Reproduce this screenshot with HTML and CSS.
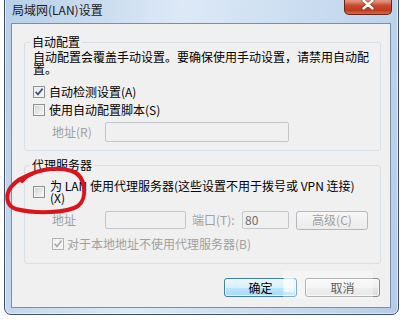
FILE: index.html
```html
<!DOCTYPE html>
<html lang="zh-CN">
<head>
<meta charset="utf-8">
<title>局域网(LAN)设置</title>
<link rel="stylesheet" href="styles.css">
</head>
<body>
<div class="window">
  <div class="titlebar">
    <span class="title">局域网(LAN)设置</span>
    <span class="close">
      <svg width="14" height="11" viewBox="0 0 14 11">
        <path d="M2.5 1.5 L11.5 9.5 M11.5 1.5 L2.5 9.5" stroke="#6a2a1c" stroke-width="4" stroke-linecap="round" fill="none" opacity="0.55"/>
        <path d="M2.5 1.5 L11.5 9.5 M11.5 1.5 L2.5 9.5" stroke="#ffffff" stroke-width="2.4" stroke-linecap="round" fill="none"/>
      </svg>
    </span>
  </div>
  <div class="client">
    <fieldset class="group g1">
      <legend>自动配置</legend>
      <p class="desc">自动配置会覆盖手动设置。要确保使用手动设置，请禁用自动配<br>置。</p>
      <div class="row r-c1">
        <span class="cb checked"><svg width="10" height="10" viewBox="0 0 10 10"><path d="M1.6 4.8 L4 7.4 L8.6 1.6" stroke="#3f5489" stroke-width="1.7" fill="none"/></svg></span>
        <span class="cb-text">自动检测设置(A)</span>
      </div>
      <div class="row r-c2">
        <span class="cb"></span>
        <span class="cb-text">使用自动配置脚本(S)</span>
      </div>
      <div class="row r-addr">
        <span class="lbl dis">地址(R)</span>
        <span class="field f1"></span>
      </div>
    </fieldset>
    <fieldset class="group g2">
      <legend>代理服务器</legend>
      <div class="row r-proxy">
        <span class="cb"></span>
        <span class="proxy-text">为 LAN 使用代理服务器(这些设置不用于拨号或 VPN 连接)<br>(X)</span>
      </div>
      <div class="row r-addr2">
        <span class="lbl dis">地址</span>
        <span class="field f2"></span>
        <span class="lbl2 dis">端口(T):</span>
        <span class="field f3">80</span>
        <span class="btn-dis">高级(C)</span>
      </div>
      <div class="row r-local">
        <span class="cb dis checked"><svg width="10" height="10" viewBox="0 0 10 10"><path d="M1.6 4.8 L4 7.4 L8.6 1.6" stroke="#a9a9a9" stroke-width="1.6" fill="none"/></svg></span>
        <span class="local-text dis">对于本地地址不使用代理服务器(B)</span>
      </div>
    </fieldset>
    <div class="buttons">
      <button class="btn btn-default">确定</button>
      <button class="btn btn-cancel">取消</button>
    </div>
  </div>
</div>
<div class="watermark"><span class="wm-block"></span></div>
<svg class="annotation" width="404" height="320" viewBox="0 0 404 320">
  <path d="M22 181 C30 170 56 166 72 171 C86 176 88 198 78 206 C68 213 35 214 16 209 C6 206 5 195 11 187 C15 182 22 177 32 174" stroke="#d9141b" stroke-width="4" stroke-linecap="round" fill="none"/>
</svg>
</body>
</html>
```
FILE: styles.css
```css
html, body {
  margin: 0;
  padding: 0;
}
body {
  width: 404px;
  height: 320px;
  overflow: hidden;
  position: relative;
  background: #ffffff;
  font-family: "Noto Sans CJK SC", "Noto Sans", sans-serif;
  font-size: 12px;
  color: #000;
}
.window {
  margin: -6px 0 0 4px;
  width: 395px;
  height: 321px;
  box-sizing: border-box;
  border: 1px solid #3e4f63;
  border-radius: 7px;
  background: linear-gradient(100deg, #b7cfe9 0%, #c9dbef 20%, #dde9f6 40%, #cfe0f2 60%, #c2d7ee 80%, #b4cce8 100%);
  box-shadow: inset 0 0 0 1px rgba(255, 255, 255, 0.55);
  display: flex;
  flex-direction: column;
}
.titlebar {
  height: 28px;
  flex: none;
  display: flex;
  align-items: flex-start;
  padding-left: 7px;
}
.title {
  padding-top: 8px;
  line-height: 14px;
  font-size: 12px;
  color: #1b1b1b;
}
.close {
  margin-left: auto;
  margin-right: 6px;
  width: 48px;
  height: 20px;
  box-sizing: border-box;
  border: 1px solid #6b2418;
  border-top: none;
  border-radius: 0 0 5px 5px;
  background: linear-gradient(#eab0a2 0%, #dc8b76 35%, #c84b2e 55%, #bf3a1f 80%, #d56b4d 100%);
  display: flex;
  align-items: center;
  justify-content: center;
}
.close svg {
  display: block;
}
.client {
  margin: 0 7px 0 6px;
  height: 285px;
  flex: none;
  box-sizing: border-box;
  border: 1px solid #7d8fa4;
  background: #f0f0f0;
  display: flex;
  flex-direction: column;
}
.group {
  margin: 0 9px 0 12px;
  padding: 0 0 0 8px;
  border: 1px solid #d5dfe5;
  border-radius: 3px;
  min-width: 0;
  flex: none;
}
.g1 {
  margin-top: 12px;
  padding-top: 3px;
  padding-bottom: 7px;
}
.g2 {
  margin-top: 8px;
  padding-bottom: 11px;
}
legend {
  padding: 0 2px;
  margin-left: -3px;
  line-height: 12px;
  font-size: 12px;
}
.desc {
  margin: 0;
  line-height: 12px;
  white-space: nowrap;
}
.row {
  display: flex;
  align-items: center;
  white-space: nowrap;
  line-height: 12px;
}
.r-c1 {
  margin-top: 8px;
  height: 18px;
}
.r-c2 {
  height: 18px;
}
.r-addr {
  margin-top: 2px;
  height: 22px;
  padding-left: 19px;
}
.cb {
  flex: none;
  width: 12px;
  height: 12px;
  box-sizing: border-box;
  border: 1px solid #8e8f8f;
  background: linear-gradient(135deg, #c9ced4 0%, #e4e6e9 50%, #f8f8f8 100%);
  box-shadow: inset 0 0 0 1px #f4f4f4;
}
.cb.checked {
  background: linear-gradient(135deg, #e6e9ee 0%, #fafafa 100%);
}
.cb svg {
  display: block;
}
.cb.dis {
  border-color: #b3b3b3;
  background: #f4f4f4;
}
.cb-text {
  margin-left: 4px;
}
.dis {
  color: #a0a0a0;
}
.lbl {
  width: 53px;
  flex: none;
}
.field {
  flex: none;
  box-sizing: border-box;
  border: 1px solid #c3c7cb;
  border-radius: 2px;
  background: #f0f0f0;
}
.f1 {
  width: 184px;
  height: 20px;
}
.r-proxy {
  margin-top: 9px;
}
.proxy-text {
  margin-left: 5px;
  line-height: 12px;
}
.r-addr2 {
  margin-top: 6px;
  height: 20px;
  padding-left: 19px;
}
.f2 {
  width: 81px;
  height: 18px;
}
.lbl2 {
  margin-left: 6px;
  width: 50px;
  flex: none;
}
.f3 {
  width: 47px;
  height: 18px;
  padding-left: 2px;
  line-height: 16px;
  color: #6d6d6d;
}
.btn-dis {
  flex: none;
  margin-left: 7px;
  width: 72px;
  height: 19px;
  box-sizing: border-box;
  border: 1px solid #b5b9bd;
  border-radius: 3px;
  background: linear-gradient(#f6f6f6, #ececec);
  color: #a0a0a0;
  display: flex;
  align-items: center;
  justify-content: center;
}
.r-local {
  margin-top: 6px;
  height: 16px;
  padding-left: 19px;
}
.local-text {
  margin-left: 3px;
}
.buttons {
  flex: none;
  margin-top: 14px;
  display: flex;
  justify-content: flex-end;
  gap: 8px;
  padding-right: 10px;
}
.btn {
  font: inherit;
  font-size: 12px;
  color: #000;
  height: 19px;
  padding: 0;
  box-sizing: border-box;
  border-radius: 3px;
  line-height: 16px;
}
.btn-default {
  width: 73px;
  border: 1px solid #3c7fb1;
  background: linear-gradient(#eaf6fd 0%, #d9f0fc 50%, #bee6fd 51%, #a7d9f5 100%);
  box-shadow: inset 0 0 0 1px rgba(255, 255, 255, 0.7);
}
.btn-cancel {
  width: 75px;
  border: 1px solid #8a8a8a;
  background: linear-gradient(#f7f7f7 0%, #f0f0f0 50%, #e6e6e6 51%, #dcdcdc 100%);
  box-shadow: inset 0 0 0 1px rgba(255, 255, 255, 0.7);
}
.watermark {
  position: absolute;
  left: 283px;
  top: 271px;
  width: 90px;
  height: 28px;
  background: rgba(255, 255, 255, 0.35);
  pointer-events: none;
}
.wm-block {
  position: absolute;
  left: 1px;
  top: 6px;
  width: 10px;
  height: 15px;
  background: rgba(255, 255, 255, 0.6);
}
.annotation {
  position: absolute;
  left: 0;
  top: 0;
  pointer-events: none;
}
```
